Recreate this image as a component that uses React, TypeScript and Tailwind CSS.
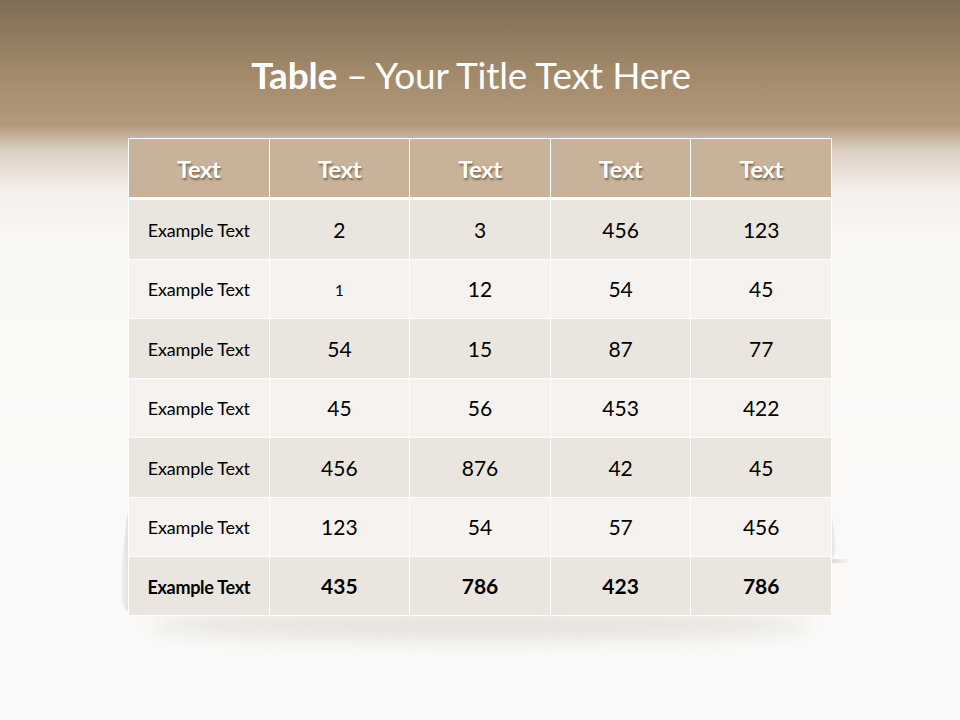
import React from 'react';

const rows: string[][] = [
  ['2', '3', '456', '123'],
  ['1', '12', '54', '45'],
  ['54', '15', '87', '77'],
  ['45', '56', '453', '422'],
  ['456', '876', '42', '45'],
  ['123', '54', '57', '456'],
];

const totals = ['435', '786', '423', '786'];

const App: React.FC = () => {
  return (
    <div className="relative w-[960px] h-[720px] overflow-hidden bg-[linear-gradient(180deg,#7f6d57_0px,#a08869_70px,#b39a7c_125px,#ddd1c5_152px,#f4efea_190px,#faf8f5_240px,#fbfaf8_720px)] font-['Lato','Open_Sans',sans-serif]">
      {/* Title */}
      <h1 className="pt-[53px] pr-[18px] text-center text-[37px] leading-[44px] text-white tracking-[-0.2px]">
        <span className="font-bold">Table</span> – Your Title Text Here
      </h1>

      {/* Table with paper curl behind */}
      <div className="relative mx-auto mt-[41px] w-[704px]">
        {/* shadow under the sheet */}
        <div className="absolute left-[20px] right-[20px] -bottom-[24px] h-[30px] rounded-[50%] bg-[#ddd8d1] blur-[10px] opacity-70" />
        {/* left curl */}
        <svg className="absolute -left-[12px] top-[372px]" width="24" height="110" viewBox="0 0 24 110">
          <defs>
            <linearGradient id="lc" x1="0" y1="0" x2="1" y2="0">
              <stop offset="0" stopColor="#f3f2f0" />
              <stop offset="0.5" stopColor="#d9d8d6" />
              <stop offset="1" stopColor="#efeeec" />
            </linearGradient>
          </defs>
          <path d="M12 0 C7 35 4 70 5 88 C6 100 14 104 22 104 L14 104 Z" fill="url(#lc)" opacity="0.85" />
        </svg>
        {/* right curl */}
        <svg className="absolute -right-[32px] top-[326px]" width="42" height="110" viewBox="0 0 42 110">
          <defs>
            <linearGradient id="rc" x1="0" y1="0" x2="1" y2="0">
              <stop offset="0" stopColor="#eeecea" />
              <stop offset="0.6" stopColor="#dcdad7" />
              <stop offset="1" stopColor="#f5f4f2" />
            </linearGradient>
            <linearGradient id="rs" x1="0" y1="0" x2="1" y2="0">
              <stop offset="0" stopColor="#bdb9b4" stopOpacity="0.8" />
              <stop offset="1" stopColor="#bdb9b4" stopOpacity="0" />
            </linearGradient>
          </defs>
          <path d="M0 0 C6 30 12 60 14 82 C15 92 10 96 0 96 Z" fill="url(#rc)" opacity="0.8" />
          <ellipse cx="14" cy="97" rx="16" ry="2" fill="url(#rs)" />
        </svg>

        <div className="relative bg-white p-px">
          {/* Header */}
          <div className="grid grid-cols-5 gap-px">
            {['Text', 'Text', 'Text', 'Text', 'Text'].map((h, i) => (
              <div
                key={i}
                className="h-[58px] flex items-center justify-center pt-[4px] bg-[#c8b29a] text-white font-bold text-[23.5px] tracking-[-0.3px] [text-shadow:1px_2px_2px_rgba(60,40,20,0.55)]"
              >
                {h}
              </div>
            ))}
          </div>

          {/* Body */}
          <div className="mt-[3px] grid grid-cols-5 gap-px bg-white">
            {rows.map((r, ri) => {
              const bg = ri % 2 === 0 ? 'bg-[#ebe5df]' : 'bg-[#f5f2ef]';
              return (
                <React.Fragment key={ri}>
                  <div className={`h-[58.5px] flex items-center justify-center pt-[2px] ${bg} text-[18px] tracking-[-0.2px] text-black`}>
                    Example Text
                  </div>
                  {r.map((v, ci) => (
                    <div
                      key={ci}
                      className={`h-[58.5px] flex items-center justify-center ${bg} text-black ${ri === 1 && ci === 0 ? 'text-[15px] pt-[2px]' : 'text-[21px]'}`}
                    >
                      {v}
                    </div>
                  ))}
                </React.Fragment>
              );
            })}
            <div className="h-[58px] flex items-center justify-center pt-[2px] bg-[#ebe5df] text-[18px] tracking-[-0.3px] font-bold text-black">
              Example Text
            </div>
            {totals.map((v, ci) => (
              <div key={ci} className="h-[58px] flex items-center justify-center bg-[#ebe5df] text-[21px] font-bold text-black">
                {v}
              </div>
            ))}
          </div>
        </div>
      </div>
    </div>
  );
};

export default App;
